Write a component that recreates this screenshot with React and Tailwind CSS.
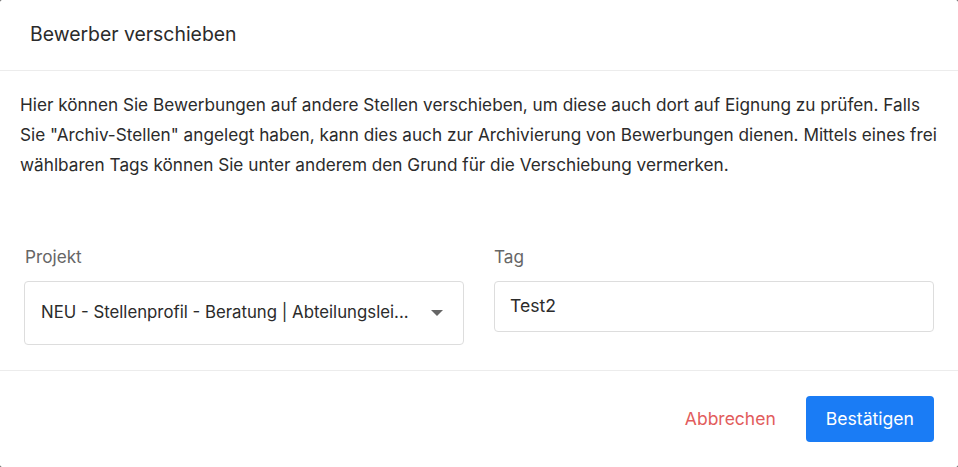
export default function App() {
  return (
    <div className="w-[958px] h-[467px] bg-[#444]" style={{ fontFamily: 'Inter, "Noto Sans", sans-serif' }}>
      <div className="w-full h-full bg-white rounded-[2px] flex flex-col text-[#2b2b2b]">
        <div className="h-[71px] px-[30px] flex items-center border-b border-[#ececec]">
          <h2 className="text-[19.4px] leading-none">Bewerber verschieben</h2>
        </div>
        <div className="flex-1 flex flex-col">
          <p className="pl-[20px] pr-[10px] pt-[19px] text-[17.2px] leading-[30px] whitespace-nowrap">
            Hier können Sie Bewerbungen auf andere Stellen verschieben, um diese auch dort auf Eignung zu prüfen. Falls
            <br />
            Sie "Archiv-Stellen" angelegt haben, kann dies auch zur Archivierung von Bewerbungen dienen. Mittels eines frei
            <br />
            wählbaren Tags können Sie unter anderem den Grund für die Verschiebung vermerken.
          </p>
          <div className="grid grid-cols-2 gap-[30px] px-[24px] mt-[65px]">
            <div>
              <label className="block text-[17.2px] text-[#666] pl-[1px] mb-[12px] leading-[24px]">Projekt</label>
              <div className="h-[64px] border border-[#ddd] rounded-[4px] flex items-center pl-[16px] pr-[20px] justify-between">
                <span className="text-[16.8px] whitespace-nowrap overflow-hidden">NEU - Stellenprofil - Beratung | Abteilungslei...</span>
                <svg width="12" height="6" viewBox="0 0 12 6" className="shrink-0 ml-[16px]">
                  <path d="M0 0H12L6 6Z" fill="#666" />
                </svg>
              </div>
            </div>
            <div>
              <label className="block text-[17.2px] text-[#666] mb-[12px] leading-[24px]">Tag</label>
              <div className="h-[51px] border border-[#ddd] rounded-[4px] flex items-center px-[15px]">
                <span className="text-[17.6px]">Test2</span>
              </div>
            </div>
          </div>
        </div>
        <div className="h-[97px] border-t border-[#ececec] flex items-center justify-end pr-[24px] gap-[30px]">
          <button className="text-[17.5px] text-[#e25c5c]">Abbrechen</button>
          <button className="h-[46px] px-[20px] rounded-[4px] bg-[#1a7cf5] text-white text-[17.6px]">Bestätigen</button>
        </div>
      </div>
    </div>
  );
}
